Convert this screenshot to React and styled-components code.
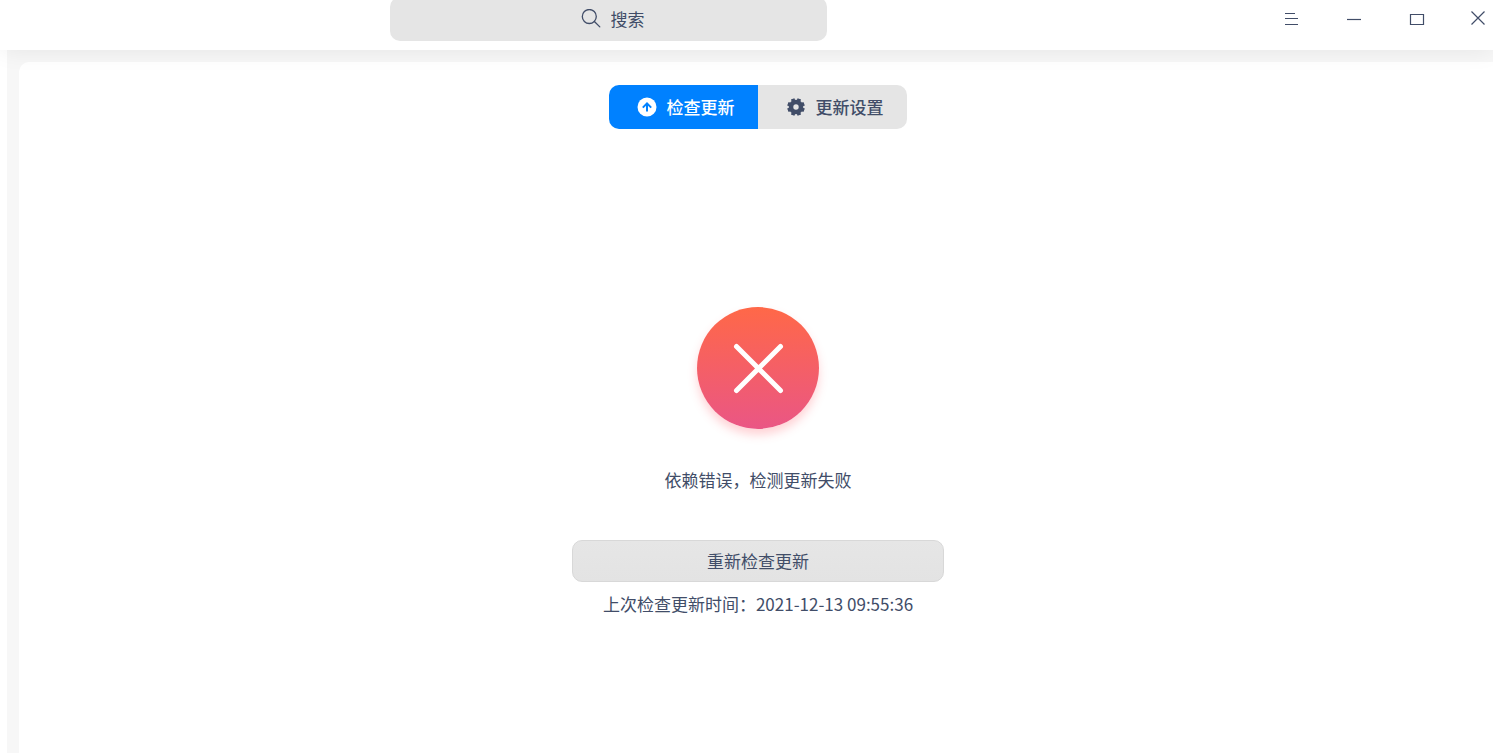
import React from "react";
import styled, { createGlobalStyle } from "styled-components";

const App = () => {
  const [tab, setTab] = React.useState("check");

  return (
    <Window>
      <GlobalStyle />
      <TitleBar>
        <SearchBx>
          <SearchIcon />
          <SearchInput type="text" placeholder="搜索" aria-label="搜索" />
        </SearchBx>
        <WindowBtns>
          <WindowBtn type="button" aria-label="菜单">
            <svg width="20" height="20" viewBox="0 0 20 20">
              <path d="M3 4.5h10M3 9.5h13M3 15.5h13" />
            </svg>
          </WindowBtn>
          <WindowBtn type="button" aria-label="最小化">
            <svg width="20" height="20" viewBox="0 0 20 20">
              <path d="M3 10.5h14" />
            </svg>
          </WindowBtn>
          <WindowBtn type="button" aria-label="最大化">
            <svg width="20" height="20" viewBox="0 0 20 20">
              <path d="M4.5 5.5h13v10h-13z" />
            </svg>
          </WindowBtn>
          <WindowBtn type="button" aria-label="关闭">
            <svg width="20" height="20" viewBox="0 0 20 20">
              <path d="M3.5 2.5l13 13M16.5 2.5l-13 13" />
            </svg>
          </WindowBtn>
        </WindowBtns>
      </TitleBar>

      <Body>
        <Panel>
          <Tabs>
            <Tab
              type="button"
              $active={tab === "check"}
              onClick={() => setTab("check")}
            >
              <UpdateIcon />
              检查更新
            </Tab>
            <Tab
              type="button"
              $active={tab === "setting"}
              onClick={() => setTab("setting")}
            >
              <GearIcon />
              更新设置
            </Tab>
          </Tabs>

          <Result>
            <ErrorCircle>
              <svg width="54" height="54" viewBox="0 0 54 54">
                <path d="M5.5 5.5l44 44M49.5 5.5l-44 44" />
              </svg>
            </ErrorCircle>
            <StatusTxt>依赖错误，检测更新失败</StatusTxt>
            <RetryBtn type="button">重新检查更新</RetryBtn>
            <TimeTxt>上次检查更新时间：2021-12-13 09:55:36</TimeTxt>
          </Result>
        </Panel>
      </Body>
    </Window>
  );
};

const SearchIcon = () => (
  <svg
    width="20"
    height="20"
    viewBox="0 0 20 20"
    fill="none"
    stroke="#414d68"
    strokeWidth="1.3"
    strokeLinecap="round"
    aria-hidden="true"
  >
    <circle cx="8.3" cy="7.5" r="7" />
    <path d="M13.4 12.5l5.4 5.4" />
  </svg>
);

const UpdateIcon = () => (
  <svg width="20" height="20" viewBox="0 0 20 20" aria-hidden="true">
    <circle cx="10" cy="10" r="9.5" fill="#fff" />
    <path
      d="M10 14.6V7M5.8 10.6l4.2-4.2l4.2 4.2"
      fill="none"
      stroke="#0081ff"
      strokeWidth="2"
    />
  </svg>
);

const GearIcon = () => (
  <svg
    width="20"
    height="20"
    viewBox="0 0 20 20"
    fill="none"
    stroke="#414d68"
    aria-hidden="true"
  >
    <circle cx="10" cy="10" r="5" strokeWidth="4.6" />
    {[22.5, 67.5, 112.5, 157.5].map((deg) => (
      <path
        key={deg}
        d="M10 1.2v3M10 15.8v3"
        strokeWidth="3.8"
        transform={`rotate(${deg} 10 10)`}
      />
    ))}
  </svg>
);

const GlobalStyle = createGlobalStyle`
  * {
    box-sizing: border-box;
  }
  body {
    margin: 0;
    background-color: #fff;
    color: #414d68;
    font-family: "Noto Sans CJK SC", sans-serif;
    font-size: 17px;
    line-height: 26px;
  }
  button,
  input {
    padding: 0;
    border: none;
    background: none;
    color: inherit;
    font: inherit;
  }
  button {
    cursor: pointer;
  }
  svg {
    display: block;
    flex-shrink: 0;
  }
`;

const Window = styled.div`
  display: flex;
  flex-direction: column;
  min-height: 100vh;
`;

const TitleBar = styled.header`
  display: grid;
  grid-template-columns: 390fr 437fr 666fr;
  align-items: start;
  position: relative;
  z-index: 1;
  height: 50px;
  background-color: #fff;
  box-shadow: 0 0 24px rgba(0, 0, 0, 0.08);
`;

const SearchBx = styled.label`
  grid-column: 2;
  display: flex;
  align-items: center;
  justify-content: center;
  gap: 10px;
  height: 44px;
  margin-top: -3px;
  padding-left: 14px;
  border-radius: 10px;
  background-color: #e5e5e5;
`;

const SearchInput = styled.input`
  width: 40px;
  outline: none;

  &::placeholder {
    color: #414d68;
    opacity: 1;
  }
`;

const WindowBtns = styled.div`
  display: flex;
  justify-content: flex-end;
  gap: 32px;
`;

const WindowBtn = styled.button`
  display: flex;
  align-items: center;
  justify-content: center;
  width: 30px;
  height: 38px;

  path {
    fill: none;
    stroke: #414d68;
    stroke-width: 1.2;
  }
`;

const Body = styled.div`
  display: flex;
  flex: 1;
  margin-left: 7px;
  padding: 12px 0 0 12px;
  background-color: #f7f7f7;
`;

const Panel = styled.main`
  display: flex;
  flex: 1;
  flex-direction: column;
  align-items: center;
  padding: 23px 0 24px 4px;
  border-radius: 10px 0 0 0;
  background-color: #fff;
`;

const Tabs = styled.nav`
  display: flex;
  border-radius: 10px;
  overflow: hidden;
`;

const Tab = styled.button`
  display: flex;
  align-items: center;
  justify-content: center;
  gap: 10px;
  width: 149px;
  height: 44px;
  padding-left: 4px;
  background-color: ${(props) => (props.$active ? "#0081ff" : "#e5e5e5")};
  color: ${(props) => (props.$active ? "#fff" : "#414d68")};
  font-weight: 500;
`;

const Result = styled.section`
  display: flex;
  flex-direction: column;
  align-items: center;
  width: 100%;
  padding-top: 178px;
`;

const ErrorCircle = styled.div`
  display: flex;
  align-items: center;
  justify-content: center;
  width: 122px;
  height: 122px;
  border-radius: 50%;
  background: linear-gradient(#ff6848, #ea5685);
  box-shadow: 0 6px 10px rgba(255, 80, 90, 0.25);

  path {
    fill: none;
    stroke: #fff;
    stroke-width: 5;
    stroke-linecap: round;
  }
`;

const StatusTxt = styled.p`
  margin: 38px 0 0;
`;

const RetryBtn = styled.button`
  width: 372px;
  max-width: 100%;
  height: 42px;
  margin-top: 47px;
  border: 1px solid #d8d8d8;
  border-radius: 10px;
  background: linear-gradient(#e6e6e6, #e3e3e3);
`;

const TimeTxt = styled.p`
  margin: 9px 0 0;
`;

export default App;
